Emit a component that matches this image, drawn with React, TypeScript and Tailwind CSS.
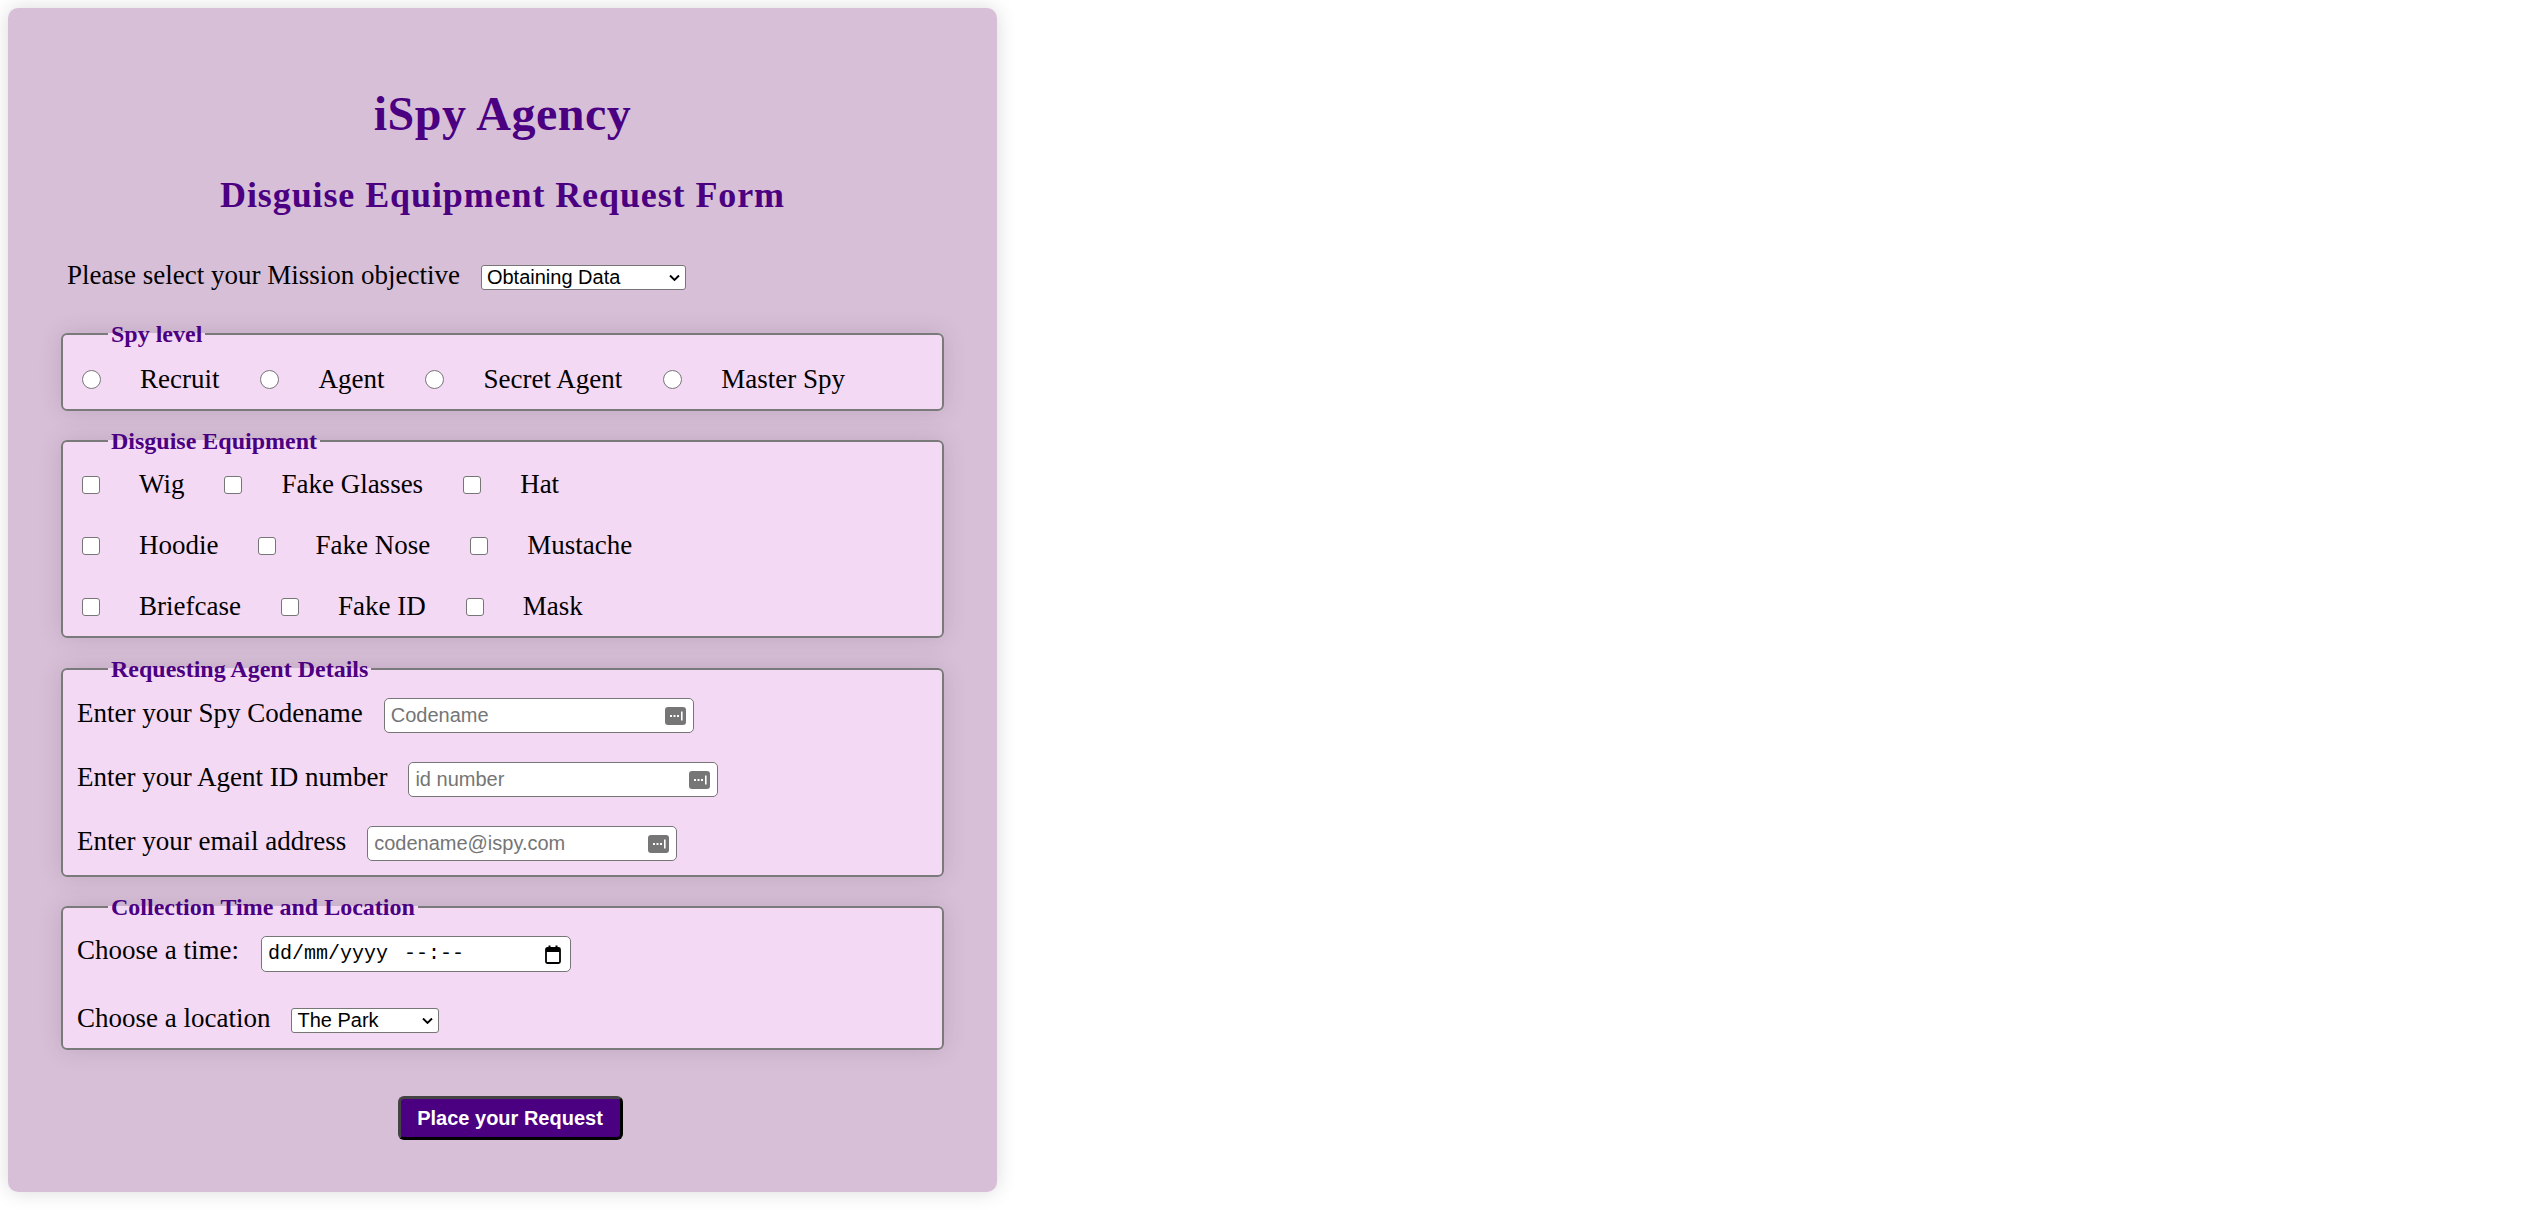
import React from "react";

const levels = ["Recruit", "Agent", "Secret Agent", "Master Spy"];

const equipment = [
  ["Wig", "Fake Glasses", "Hat"],
  ["Hoodie", "Fake Nose", "Mustache"],
  ["Briefcase", "Fake ID", "Mask"],
];

function Chevron() {
  return (
    <svg
      width="11"
      height="7"
      viewBox="0 0 11 7"
      className="pointer-events-none absolute right-[6px] top-1/2 -translate-y-1/2"
    >
      <polyline points="1,1 5.5,5.5 10,1" fill="none" stroke="#000" strokeWidth="1.9" />
    </svg>
  );
}

function Select({ options, width }: { options: string[]; width: string }) {
  return (
    <span className="relative ml-[21px] inline-flex">
      <select
        defaultValue={options[0]}
        className={`h-[25px] ${width} appearance-none rounded-[3px] border border-[#767676] bg-white pl-[5px] font-['Liberation_Sans',Arial,sans-serif] text-[20px] leading-[23px] text-black`}
      >
        {options.map((o) => (
          <option key={o}>{o}</option>
        ))}
      </select>
      <Chevron />
    </span>
  );
}

// little key icon a password manager drops into text fields
function FillIcon() {
  return (
    <svg
      width="21"
      height="18"
      viewBox="0 0 21 18"
      className="pointer-events-none absolute right-[8px] top-1/2 -translate-y-1/2"
    >
      <rect x="0" y="0" width="21" height="18" rx="3" fill="#767676" />
      <rect x="5" y="8" width="2" height="2" fill="#fff" />
      <rect x="8.5" y="8" width="2" height="2" fill="#fff" />
      <rect x="12" y="8" width="2" height="2" fill="#fff" />
      <rect x="16" y="4.5" width="1.6" height="9" fill="#fff" />
    </svg>
  );
}

function TextRow({
  label,
  placeholder,
  type,
}: {
  label: string;
  placeholder: string;
  type: string;
}) {
  return (
    <div className="flex items-baseline">
      <label className="text-[27px] leading-[31px]">{label}</label>
      <span className="relative ml-[21px] inline-flex">
        <input
          type={type}
          placeholder={placeholder}
          className="h-[35px] w-[310px] rounded-[5px] border-[1.5px] border-[#767676] bg-white pl-[6px] pr-[36px] font-['Liberation_Sans',Arial,sans-serif] text-[20px] text-black placeholder:text-[#757575]"
        />
        <FillIcon />
      </span>
    </div>
  );
}

function Fieldset({
  legend,
  className,
  children,
}: {
  legend: string;
  className: string;
  children: React.ReactNode;
}) {
  return (
    <fieldset
      className={`rounded-[6px] border-2 border-[#7a7a7a] bg-[#f4d9f4] px-[14px] pb-[14px] shadow-[0_0_25px_rgba(0,0,0,0.12)] ${className}`}
    >
      <legend className="ml-[31px] px-[3px] text-[24px] font-bold leading-[28px] text-[#4b0082]">
        {legend}
      </legend>
      {children}
    </fieldset>
  );
}

export default function App() {
  return (
    <div className="min-h-screen bg-white p-[8px] font-['Liberation_Serif','Times_New_Roman',serif] text-black">
      <form className="flex w-[989px] flex-col rounded-[10px] bg-[#d8bfd8] px-[53px] pb-[52px] shadow-[0_0_20px_rgba(0,0,0,0.15)]">
        <h1 className="mt-[78px] text-center text-[48px] font-bold leading-[56px] tracking-[0.5px] text-[#4b0082]">
          iSpy Agency
        </h1>
        <h2 className="mt-[32px] text-center text-[36px] font-bold leading-[42px] tracking-[0.9px] text-[#4b0082]">
          Disguise Equipment Request Form
        </h2>

        <div className="mt-[44px] flex items-baseline pl-[6px]">
          <label className="text-[27px] leading-[31px]">
            Please select your Mission objective
          </label>
          <Select
            width="w-[205px]"
            options={["Obtaining Data", "Surveillance", "Infiltration", "Extraction"]}
          />
        </div>

        <Fieldset legend="Spy level" className="mt-[29px] pt-[16px]">
          <div className="flex items-center text-[27px] leading-[31px]">
            {levels.map((level) => (
              <label key={level} className="flex items-center">
                <input
                  type="radio"
                  name="level"
                  className="ml-[5px] h-[19px] w-[19px] appearance-none rounded-full border-[1.5px] border-[#767676] bg-white"
                />
                <span className="ml-[39px] mr-[36px]">{level}</span>
              </label>
            ))}
          </div>
        </Fieldset>

        <Fieldset legend="Disguise Equipment" className="mt-[16px] pt-[14px]">
          <div className="flex flex-col gap-[30px] text-[27px] leading-[31px]">
            {equipment.map((row) => (
              <div key={row[0]} className="flex items-center">
                {row.map((item) => (
                  <label key={item} className="flex items-center">
                    <input
                      type="checkbox"
                      className="ml-[5px] h-[18px] w-[18px] appearance-none rounded-[3px] border-[1.5px] border-[#767676] bg-white"
                    />
                    <span className="ml-[39px] mr-[35px]">{item}</span>
                  </label>
                ))}
              </div>
            ))}
          </div>
        </Fieldset>

        <Fieldset legend="Requesting Agent Details" className="mt-[17px] pt-[15px]">
          <div className="flex flex-col gap-[29px]">
            <TextRow label="Enter your Spy Codename" placeholder="Codename" type="text" />
            <TextRow label="Enter your Agent ID number" placeholder="id number" type="text" />
            <TextRow label="Enter your email address" placeholder="codename@ispy.com" type="email" />
          </div>
        </Fieldset>

        <Fieldset legend="Collection Time and Location" className="mt-[16px] pt-[14px]">
          <div className="flex items-baseline">
            <label className="text-[27px] leading-[31px]">Choose a time:</label>
            <div className="ml-[22px] flex h-[36px] w-[310px] items-center rounded-[5px] border-[1.5px] border-[#767676] bg-white pl-[6px] pr-[9px] font-['Liberation_Mono','Courier_New',monospace] text-[20px] text-black">
              <span>dd/mm/yyyy</span>
              <span className="ml-[16px]">--:--</span>
              <svg width="16" height="19" viewBox="0 0 16 19" className="ml-auto">
                <rect x="1" y="3" width="14" height="15" rx="1.5" fill="none" stroke="#000" strokeWidth="1.8" />
                <rect x="1" y="3" width="14" height="4" fill="#000" />
                <rect x="3.5" y="0.5" width="2" height="4" fill="#000" />
                <rect x="10.5" y="0.5" width="2" height="4" fill="#000" />
              </svg>
            </div>
          </div>
          <div className="mt-[31px] flex items-baseline">
            <label className="text-[27px] leading-[31px]">Choose a location</label>
            <Select width="w-[148px]" options={["The Park", "The Library", "The Cafe", "The Docks"]} />
          </div>
        </Fieldset>

        <div className="mt-[46px] flex justify-center pl-[15px]">
          <button
            type="submit"
            className="h-[44px] w-[225px] rounded-[6px] border-[3px] border-[#444] border-b-black border-r-black bg-[#4b0082] font-['Liberation_Sans',Arial,sans-serif] text-[20px] font-bold text-white"
          >
            Place your Request
          </button>
        </div>
      </form>
    </div>
  );
}
